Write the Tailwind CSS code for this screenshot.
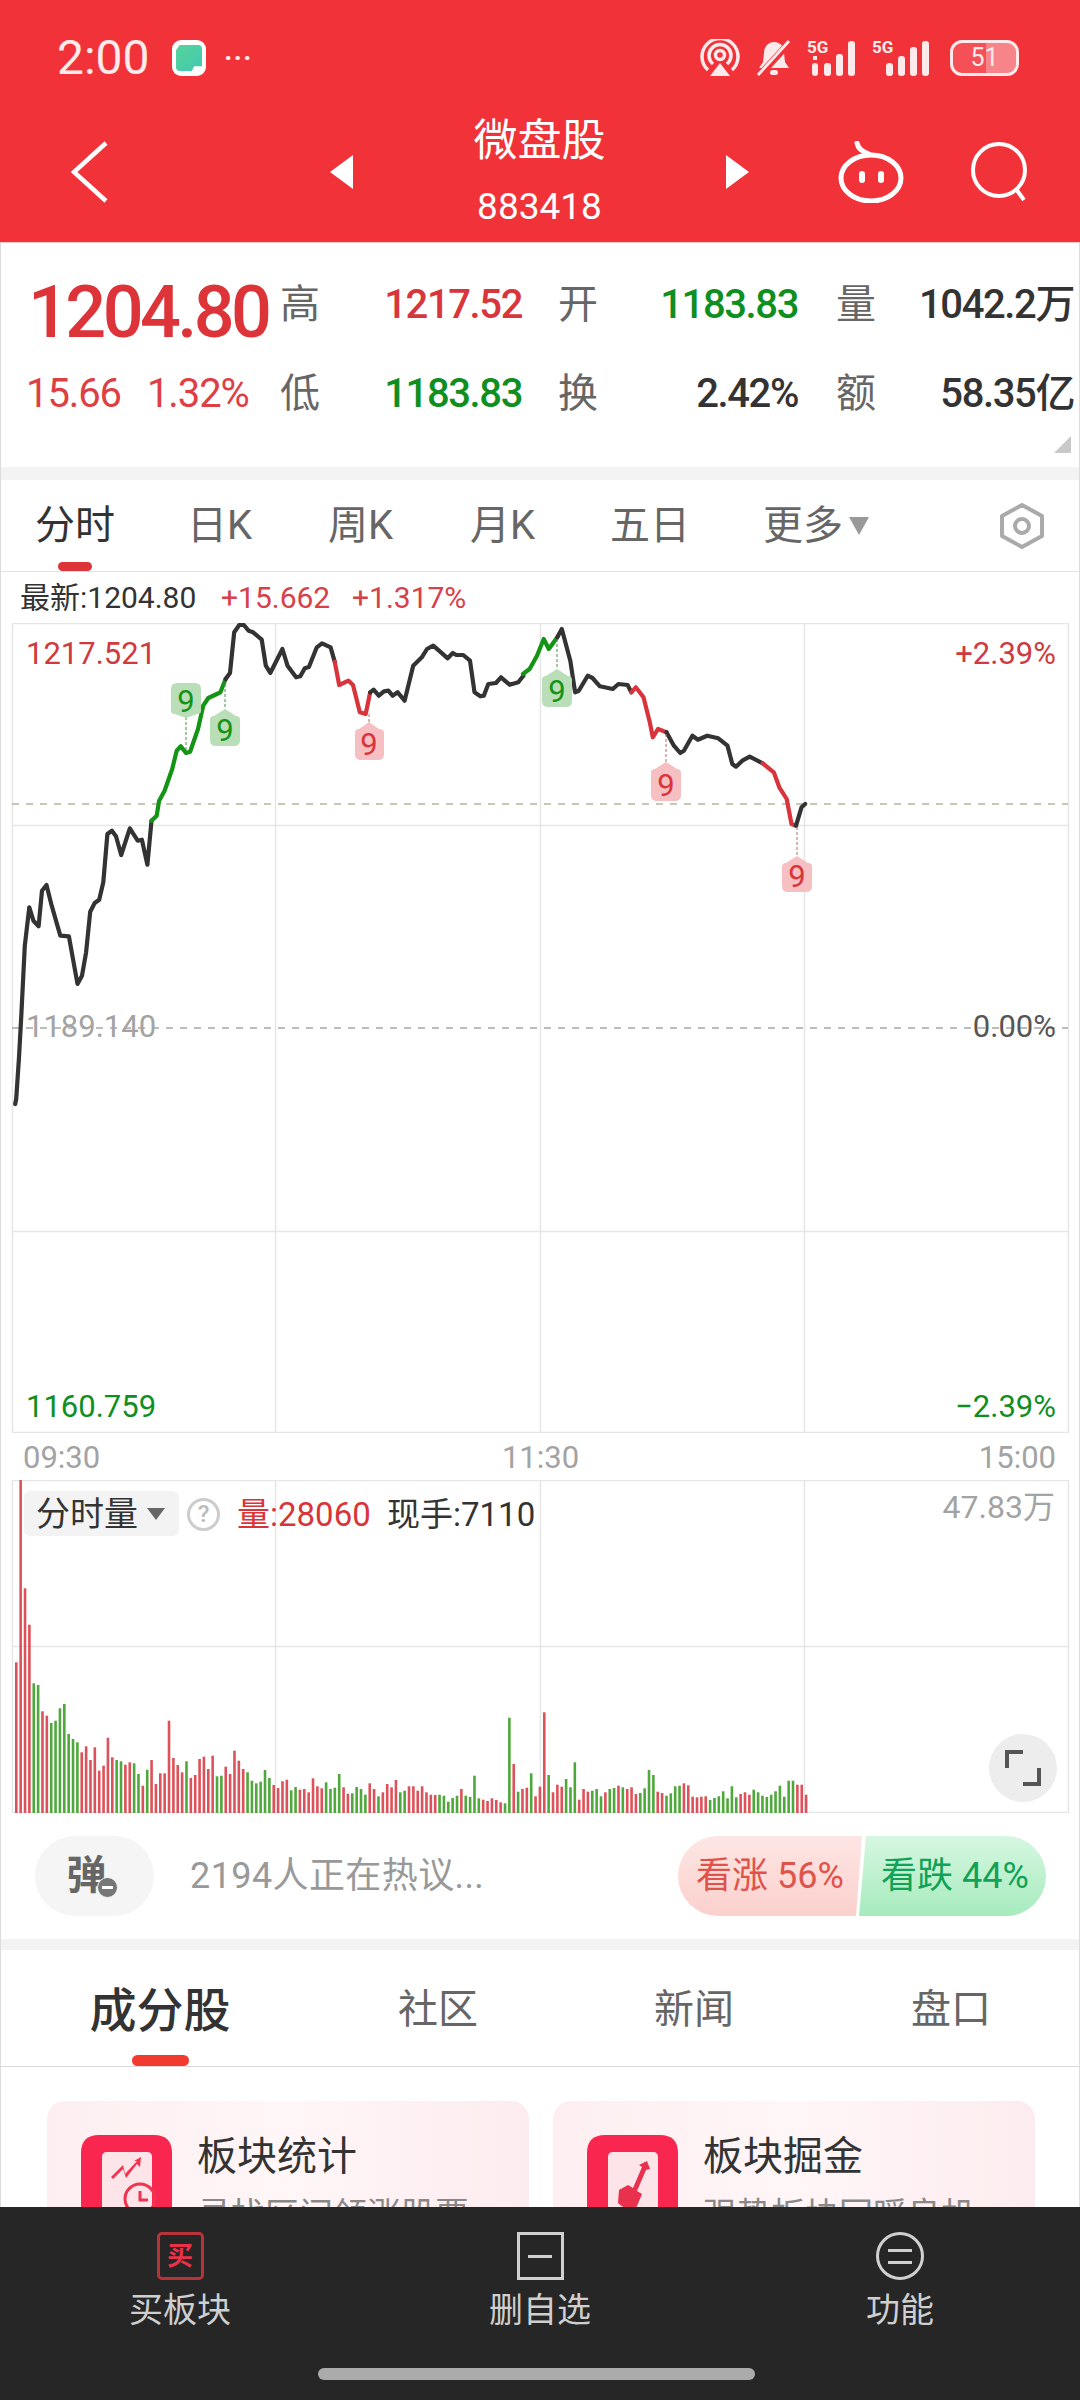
<!DOCTYPE html>
<html lang="zh-CN">
<head>
    <meta charset="UTF-8">
    <title>微盘股 883418</title>
    <script src="https://cdn.jsdelivr.net/npm/@tailwindcss/browser@4"></script>
</head>
<body class="bg-white font-['Roboto','Noto_Sans_CJK_SC',sans-serif]">
<div class="w-[1080px] h-[2400px] flex flex-col overflow-hidden bg-white">

    <!-- 顶部红色区域 -->
    <header class="h-[243px] shrink-0 bg-[#f23239] text-white border-b border-[#f7c9c9]">
        <div class="h-[116px] flex items-center text-[#fdeaea]">
            <span class="ml-[57px] w-[99px] text-[48px] leading-none">2:00</span>
            <div class="ml-[16px] w-[34px] h-[36px] rounded-[9px] bg-white flex items-center justify-center">
                <div class="w-[26px] h-[26px] rounded-[4px] bg-gradient-to-br from-[#58d39a] to-[#3fc8b0] [clip-path:polygon(14%_0,100%_0,100%_82%,70%_82%,60%_100%,0_100%,0_20%)]"></div>
            </div>
            <span class="ml-[18px] w-[32px] text-[28px] leading-none font-bold tracking-[1px]">···</span>
            <svg class="ml-[443px] w-[42px] h-[38px]" viewBox="0 0 42 38" fill="none" stroke="#fdeaea" stroke-width="3.5">
                <path d="M9 31a18 18 0 1 1 24 0"/>
                <path d="M14 25a11 11 0 1 1 14 0"/>
                <circle cx="21" cy="16" r="4.5"/>
                <path d="M11 37l10-13 10 13z" fill="#fdeaea" stroke="none"/>
            </svg>
            <svg class="ml-[15px] w-[36px] h-[38px]" viewBox="0 0 36 38" fill="#fdeaea">
                <path d="M18 3c7 0 10 5 10 11l1 9 4 6H3l4-6 1-9c0-6 4-11 10-11z"/>
                <rect x="14" y="31" width="8" height="5" rx="2.5"/>
                <path d="M34 3L3 37" stroke="#f23239" stroke-width="7"/>
                <path d="M33 2L2 36" stroke="#fdeaea" stroke-width="3"/>
            </svg>
            <svg class="ml-[15px] w-[60px] h-[38px]" viewBox="0 0 60 38" fill="#fdeaea">
                <text x="0" y="14" font-size="17" font-weight="700" font-family="Roboto">5G</text>
                <rect x="6" y="17" width="4" height="4"/><rect x="5" y="24" width="6" height="13" rx="3"/>
                <rect x="17" y="24" width="7" height="13" rx="3"/>
                <rect x="29" y="15" width="7" height="22" rx="3"/>
                <rect x="41" y="2" width="7" height="35" rx="3"/>
            </svg>
            <svg class="ml-[5px] w-[60px] h-[38px]" viewBox="0 0 60 38" fill="#fdeaea">
                <text x="0" y="14" font-size="17" font-weight="700" font-family="Roboto">5G</text>
                <rect x="14" y="24" width="7" height="13" rx="3"/>
                <rect x="26" y="17" width="7" height="20" rx="3"/>
                <rect x="38" y="8" width="7" height="29" rx="3"/>
                <rect x="50" y="2" width="7" height="35" rx="3"/>
            </svg>
            <div class="relative ml-[18px] w-[69px] h-[36px] rounded-[12px] border-[3px] border-[#fdeaea] overflow-hidden bg-white/15 flex justify-end">
                <div class="h-full w-[30px] bg-white/30"></div>
                <span class="absolute inset-0 text-center text-[25px] leading-[30px]">51</span>
            </div>
        </div>
        <nav class="h-[112px] flex items-center">
            <svg class="ml-[70px] w-[40px] h-[62px]" viewBox="0 0 40 62" fill="none" stroke="#fff" stroke-width="4.5">
                <path d="M36 2L4 31l32 29"/>
            </svg>
            <svg class="ml-[220px] w-[23px] h-[34px]" viewBox="0 0 23 34" fill="#fff"><path d="M23 0v34L0 17z"/></svg>
            <div class="w-[373px] flex flex-col items-center">
                <span class="text-[44px] leading-[44px]">微盘股</span>
                <span class="mt-[26px] text-[37px] leading-[36px]">883418</span>
            </div>
            <svg class="w-[23px] h-[34px]" viewBox="0 0 23 34" fill="#fff"><path d="M0 0v34l23-17z"/></svg>
            <svg class="ml-[89px] w-[66px] h-[62px]" viewBox="0 0 66 62" fill="none" stroke="#fff" stroke-width="5">
                <path d="M19 2c1 6 6 9 12 11" stroke-width="5" stroke-linecap="round"/>
                <ellipse cx="33" cy="37" rx="30" ry="23"/>
                <rect x="21" y="30" width="6" height="12" rx="3" fill="#fff" stroke="none"/>
                <rect x="40" y="30" width="6" height="12" rx="3" fill="#fff" stroke="none"/>
            </svg>
            <svg class="ml-[67px] w-[60px] h-[60px]" viewBox="0 0 60 60" fill="none" stroke="#fff" stroke-width="4">
                <circle cx="28" cy="28" r="26"/>
                <path d="M45 47l8 11"/>
            </svg>
        </nav>
    </header>

    <main class="flex-1 min-h-0 flex flex-col border-x border-[#dcdcdc]">
        <!-- 报价 -->
        <section class="h-[224px] shrink-0 relative flex pt-[17px]">
            <div class="w-[279px] shrink-0">
                <div class="h-[89px] pl-[27px] flex items-end text-[#dd3439] text-[72px] leading-none font-medium tracking-[-3.6px]">1204.80</div>
                <div class="h-[89px] pl-[25px] flex items-center gap-[26px] text-[#dd3f44] text-[40px] leading-none tracking-[-1.1px]"><span>15.66</span><span>1.32%</span></div>
            </div>
            <div class="grid grid-cols-[278px_278px_238px] auto-rows-[89px] text-[40px] leading-none tracking-[-1.4px] font-medium">
                <div class="flex items-center justify-between pr-[36px]"><span class="text-[#666] font-normal tracking-normal">高</span><span class="text-[#d8363c]">1217.52</span></div>
                <div class="flex items-center justify-between pr-[38px]"><span class="text-[#666] font-normal tracking-normal">开</span><span class="text-[#0f8f1f]">1183.83</span></div>
                <div class="flex items-center justify-between"><span class="text-[#666] font-normal tracking-normal">量</span><span class="text-[#333]">1042.2万</span></div>
                <div class="flex items-center justify-between pr-[36px]"><span class="text-[#666] font-normal tracking-normal">低</span><span class="text-[#0f8f1f]">1183.83</span></div>
                <div class="flex items-center justify-between pr-[38px]"><span class="text-[#666] font-normal tracking-normal">换</span><span class="text-[#333]">2.42%</span></div>
                <div class="flex items-center justify-between"><span class="text-[#666] font-normal tracking-normal">额</span><span class="text-[#333]">58.35亿</span></div>
            </div>
            <svg class="absolute right-[8px] bottom-[14px] w-[17px] h-[17px]" viewBox="0 0 17 17" fill="#c9c9c9"><path d="M17 0v17H0z"/></svg>
        </section>
        <div class="h-[13px] shrink-0 bg-[#f3f3f3]"></div>

        <!-- 周期切换 -->
        <div class="h-[92px] shrink-0 relative flex items-center text-[40px] leading-none text-[#666] border-b border-[#e3e3e3]">
            <span class="ml-[34px] w-[152px] text-[#333]">分时</span>
            <span class="w-[141px]">日K</span>
            <span class="w-[142px]">周K</span>
            <span class="w-[140px]">月K</span>
            <span class="w-[153px]">五日</span>
            <span class="w-[86px]">更多</span>
            <svg class="w-[20px] h-[18px]" viewBox="0 0 20 18" fill="#999"><path d="M0 0h20L10 18z"/></svg>
            <svg class="ml-[130px] w-[46px] h-[46px]" viewBox="0 0 46 46" fill="none" stroke="#aaa" stroke-width="4">
                <path d="M23 2l20 11v20L23 44 3 33V13z" stroke-linejoin="round"/>
                <circle cx="23" cy="23" r="7"/>
            </svg>
            <div class="absolute left-[57px] bottom-0 w-[34px] h-[9px] rounded-full bg-[#dd3439]"></div>
        </div>

        <!-- 最新价 -->
        <div class="h-[51px] shrink-0 flex items-center text-[30px] leading-none">
            <span class="ml-[19px] w-[201px] text-[#333]">最新:1204.80</span>
            <span class="w-[131px] text-[#d8404a]">+15.662</span>
            <span class="text-[#d8404a]">+1.317%</span>
        </div>

        <!-- 分时图 -->
        <div class="h-[810px] shrink-0 relative">
            <svg id="chart" class="absolute top-0 left-[-1px] w-[1080px] h-[810px]" viewBox="0 624 1080 810" fill="none">
                <path d="M12.5 624.5H1068.5V1433.5H12.5ZM12 826.5H1068M12 1232.5H1068M275.5 624V1434M540.5 624V1434M804.5 624V1434" stroke="#e6e6e6" stroke-width="1.5"/>
                <path d="M12 805H1068" stroke="#b5b59c" stroke-width="1.5" stroke-dasharray="7 7"/>
                <path d="M12 1029H1068" stroke="#a6a6a6" stroke-width="1.5" stroke-dasharray="7 7"/>
                <g id="lines" stroke-width="4.2" stroke-linejoin="round" stroke-linecap="round"></g>
                <g stroke-width="1" stroke-dasharray="3 2">
                    <path d="M186 718V753M225 685V710M557 640V670" stroke="#4a8f4a"/>
                    <path d="M369 715V723M666 735V763M797 828V857" stroke="#b56a6a"/>
                </g>
                <g font-size="31" font-family="Roboto" text-anchor="middle">
                    <g fill="#b9deb8">
                        <path d="M171 690q0-6 6-6h18q6 0 6 6v22q0 3-4 3l-11 4-11-4q-4 0-4-3z"/>
                        <path d="M210 721q0-4 4-4l11-7 11 7q4 0 4 4v20q0 6-6 6h-18q-6 0-6-6z"/>
                        <path d="M542 681q0-4 4-4l11-7 11 7q4 0 4 4v21q0 6-6 6h-18q-6 0-6-6z"/>
                    </g>
                    <g fill="#f6bfc1">
                        <path d="M355 734q0-4 4-4l10-7 10 7q5 0 5 4v21q0 6-6 6h-17q-6 0-6-6z"/>
                        <path d="M651 774q0-4 4-4l11-7 11 7q4 0 4 4v22q0 6-6 6h-18q-6 0-6-6z"/>
                        <path d="M782 868q0-4 4-4l11-7 11 7q4 0 4 4v19q0 6-6 6h-18q-6 0-6-6z"/>
                    </g>
                    <text x="186" y="713" fill="#149414">9</text>
                    <text x="225" y="742" fill="#149414">9</text>
                    <text x="557" y="703" fill="#149414">9</text>
                    <text x="369" y="756" fill="#d9333b">9</text>
                    <text x="666" y="797" fill="#d9333b">9</text>
                    <text x="797" y="888" fill="#d9333b">9</text>
                </g>
            </svg>
            <span class="absolute left-[25px] top-[18px] text-[31px] leading-[26px] text-[#cf3a40]">1217.521</span>
            <span class="absolute right-[23px] top-[18px] text-[31px] leading-[26px] text-[#cf3a40]">+2.39%</span>
            <span class="absolute left-[25px] top-[391px] text-[31px] leading-[26px] text-[#a3a3a3]">1189.140</span>
            <span class="absolute right-[23px] top-[391px] text-[31px] leading-[26px] text-[#555]">0.00%</span>
            <span class="absolute left-[25px] top-[771px] text-[31px] leading-[26px] text-[#0f8f1f]">1160.759</span>
            <span class="absolute right-[23px] top-[771px] text-[31px] leading-[26px] text-[#0f8f1f]">−2.39%</span>
        </div>

        <!-- 时间轴 -->
        <div class="h-[47px] shrink-0 pl-[22px] pr-[23px] pt-[2px] flex items-center justify-between text-[31px] leading-none text-[#a3a3a3]">
            <span>09:30</span><span class="ml-[2px]">11:30</span><span>15:00</span>
        </div>

        <!-- 成交量 -->
        <div class="h-[333px] shrink-0 relative">
            <svg class="absolute top-0 left-[-1px] w-[1080px] h-[333px]" viewBox="0 1481 1080 333" fill="none">
                <path d="M12.5 1481.5H1068.5V1813.5H12.5ZM12 1647.5H1068M275.5 1481V1814M540.5 1481V1814M804.5 1481V1814" stroke="#e6e6e6" stroke-width="1.5"/>
                <g id="bars"></g>
            </svg>
            <div class="absolute left-[23px] top-[11px] w-[155px] h-[45px] rounded-[6px] bg-[#f3f3f3] flex items-center pl-[12px] text-[34px] leading-none text-[#333]">
                <span>分时量</span>
                <svg class="ml-[9px] w-[18px] h-[12px]" viewBox="0 0 18 12" fill="#666"><path d="M0 0h18L9 12z"/></svg>
            </div>
            <div class="absolute left-[186px] top-[18px] w-[33px] h-[33px] rounded-full border-[3px] border-[#ccc] text-[#bbb] text-[24px] leading-[27px] text-center font-medium">?</div>
            <span class="absolute left-[236px] top-[17px] text-[33px] leading-[36px] text-[#d8343a]">量:28060</span>
            <span class="absolute left-[386px] top-[17px] text-[33px] leading-[36px] text-[#333]">现手:7110</span>
            <span class="absolute right-[24px] top-[12px] text-[32px] leading-[30px] text-[#a3a3a3]">47.83万</span>
            <div class="absolute left-[988px] top-[254px] w-[68px] h-[68px] rounded-full bg-[#ededed] flex items-center justify-center">
                <svg class="w-[38px] h-[38px]" viewBox="0 0 38 38" fill="none" stroke="#555" stroke-width="4"><path d="M3 19V3h16M35 19v16H19"/></svg>
            </div>
        </div>

        <!-- 弹幕 -->
        <div class="h-[126px] shrink-0 flex items-center">
            <div class="relative ml-[34px] w-[119px] h-[80px] rounded-full bg-[#f5f5f5] flex items-center justify-center text-[40px] leading-none font-bold text-[#666]">
                <span class="mr-[16px]">弹</span>
                <div class="absolute left-[62px] top-[41px] w-[21px] h-[21px] rounded-full bg-[#777] border border-[#f5f5f5] flex items-center justify-center">
                    <div class="w-[11px] h-[3px] bg-white"></div>
                </div>
            </div>
            <span class="ml-[36px] w-[488px] text-[36px] leading-none tracking-[0.4px] text-[#999]">2194人正在热议...</span>
            <div class="flex text-[36px] leading-none">
                <div class="w-[184px] h-[80px] rounded-l-full bg-gradient-to-b from-[#fde6e4] to-[#fbd0cc] [clip-path:polygon(0_0,100%_0,178px_100%,0_100%)] flex items-center pl-[18px] text-[#e0534a]">看涨 56%</div>
                <div class="ml-[-3px] w-[187px] h-[80px] rounded-r-full bg-gradient-to-b from-[#d6f7e1] to-[#a6ebbe] [clip-path:polygon(7px_0,100%_0,100%_100%,0_100%)] flex items-center pl-[22px] text-[#11a257]">看跌 44%</div>
            </div>
        </div>
        <div class="h-[11px] shrink-0 bg-[#f3f3f3]"></div>

        <!-- 底部标签 -->
        <div class="h-[117px] shrink-0 relative border-b border-[#d9d9d9] text-[40px] leading-none text-[#666]">
            <div class="h-full grid grid-cols-[318px_238px_274px_240px] items-center pt-[4px] text-center">
                <span class="text-[47px] leading-none font-medium text-[#333]">成分股</span>
                <span>社区</span>
                <span>新闻</span>
                <span>盘口</span>
            </div>
            <div class="absolute left-[131px] bottom-0 w-[57px] h-[11px] rounded-full bg-[#f23a30]"></div>
        </div>

        <!-- 功能卡片 -->
        <div class="flex-1 min-h-0 overflow-hidden flex gap-[24px] pl-[46px] pt-[34px]">
            <div class="relative w-[482px] h-[200px] shrink-0 rounded-[18px] bg-gradient-to-r from-[#fdeff1] via-[#fff6f7] to-[#fdecef] flex pl-[34px] pt-[34px] gap-[25px]">
                <svg class="w-[91px] h-[100px] shrink-0" viewBox="0 0 91 100">
                    <path d="M0 100V18Q0 0 18 0H73Q91 0 91 18V100Z" fill="#f9264f"/>
                    <path d="M21 100V22q0-5 5-5H66q5 0 5 5V100Z" fill="#fde4e8"/>
                    <path d="M30 42l12-12 2 9 12-13-3 0 7-4-1 10-3-3-11 14-3-9-10 10z" fill="#f0334f"/>
                    <circle cx="59" cy="64" r="15" fill="none" stroke="#f0334f" stroke-width="3"/>
                    <path d="M59 56v9h8" fill="none" stroke="#f0334f" stroke-width="3"/>
                </svg>
                <div>
                    <div class="text-[40px] leading-[44px] text-[#333]">板块统计</div>
                    <div class="mt-[16px] text-[34px] leading-[40px] text-[#888]">寻找区间领涨股票</div>
                </div>
            </div>
            <div class="relative w-[482px] h-[200px] shrink-0 rounded-[18px] bg-gradient-to-r from-[#fdeff1] via-[#fff6f7] to-[#fdecef] flex pl-[34px] pt-[34px] gap-[25px]">
                <svg class="w-[91px] h-[100px] shrink-0" viewBox="0 0 91 100">
                    <path d="M0 100V18Q0 0 18 0H73Q91 0 91 18V100Z" fill="#f9264f"/>
                    <path d="M21 100V22q0-5 5-5H66q5 0 5 5V100Z" fill="#fde4e8"/>
                    <path d="M60 26l3 8-4 1-9 21 5 3-5 12q-3 5-9 3-6-2-10-6l1-13 9-5 5 3 9-21-3-2z" fill="#e9304c"/>
                </svg>
                <div>
                    <div class="text-[40px] leading-[44px] text-[#333]">板块掘金</div>
                    <div class="mt-[16px] text-[34px] leading-[40px] text-[#888]">强势板块回暖良机</div>
                </div>
            </div>
        </div>
    </main>

    <!-- 底部操作栏 -->
    <footer class="h-[193px] shrink-0 bg-[#262626] text-[#cfcfcf]">
        <div class="grid grid-cols-3 pt-[25px]">
            <div class="flex flex-col items-center">
                <div class="w-[47px] h-[48px] rounded-[5px] border-[3px] border-[#b8323a] flex items-center justify-center text-[26px] leading-none font-bold text-[#e8324a]">买</div>
                <span class="mt-[13px] text-[34px] leading-[34px]">买板块</span>
            </div>
            <div class="flex flex-col items-center">
                <div class="w-[47px] h-[48px] border-[3px] border-[#d0d0d0] flex items-center justify-center">
                    <div class="w-[24px] h-[3px] bg-[#d0d0d0]"></div>
                </div>
                <span class="mt-[13px] text-[34px] leading-[34px]">删自选</span>
            </div>
            <div class="flex flex-col items-center">
                <div class="w-[48px] h-[48px] rounded-full border-[3px] border-[#d0d0d0] flex flex-col items-center justify-center gap-[9px]">
                    <div class="w-[24px] h-[3px] bg-[#d0d0d0]"></div>
                    <div class="w-[24px] h-[3px] bg-[#d0d0d0]"></div>
                </div>
                <span class="mt-[13px] text-[34px] leading-[34px]">功能</span>
            </div>
        </div>
        <div class="ml-[318px] mt-[41px] w-[437px] h-[12px] rounded-full bg-[#ababab]"></div>
    </footer>
</div>

<script>
    // 坐标从放大图读出: A 段 x/2.904, B 段 500+x/2.703, y 都是 600+y/3
    const A = p => [p[0] / 2.904, 600 + p[1] / 3];
    const B = p => [500 + p[0] / 2.703, 600 + p[1] / 3];
    const pairs = s => s.trim().split(/\s+/).map(t => t.split(',').map(Number));
    const BLACK = '#333333', GREEN = '#149414', RED = '#d9333b';

    const segmentos = [
        [BLACK, A, '44,1515 47,1500 55,1380 62,1250 72,1040 85,925 97,965 112,982 122,875 135,858 150,920 175,1010 200,1012 225,1155 238,1130 250,1060 262,938 275,912 288,902 300,850 312,705 325,695 337,712 352,768 377,688 400,725 412,722 428,797 440,665'],
        [GREEN, A, '440,665 455,650 462,605 478,575 500,510 513,455 525,442 540,462 552,458 575,390 590,320 605,297 630,285 640,280 655,240'],
        [BLACK, A, '655,240 668,222 680,100 695,78 708,78 722,95 735,100 760,122 772,200 785,222 820,150 835,200 860,235 872,232 885,208 897,204 920,145 935,133 960,145 972,188'],
        [RED, A, '972,188 985,258 1012,245 1025,258 1045,340 1062,345 1075,280'],
        [BLACK, A, '1075,280 1085,272 1100,290 1115,277 1128,275 1140,290 1155,280 1175,305 1200,200 1225,175 1240,150 1258,140 1275,155 1300,178 1315,162 1325,168 1345,168 1365,185 1378,280 1395,292 1405,290 1418,255 1440,252 1455,235 1480,257 1505,250 1520,230'],
        [GREEN, B, '62,225 80,210 100,170 118,120 132,150 155,115'],
        [BLACK, B, '155,115 167,90 190,185 203,280 213,275 237,230 250,237 270,262 305,270 320,255 345,258 355,280'],
        [RED, B, '355,280 367,265 388,295 405,370 413,415 427,390 450,400'],
        [BLACK, B, '450,400 470,440 487,462 497,455 520,410 535,422 560,410 590,418 615,440 628,495 638,503 655,485 675,473 710,493'],
        [RED, B, '710,493 740,520 755,565 775,600 788,675 800,680'],
        [BLACK, B, '800,680 815,625 825,615']
    ];
    document.getElementById('lines').innerHTML = segmentos.map(([color, f, s]) => {
        const pts = pairs(s).map(f).map(p => p[0].toFixed(1) + ',' + p[1].toFixed(1)).join(' ');
        return `<polyline points="${pts}" stroke="${color}"/>`;
    }).join('');

    // 成交量: 每根柱的顶部 y(放大图), r 红 g 绿
    const barras = '640r 92r 418r 527r 703g 708g 787r 800r 822g 815g 778g 765g 855g 870g 880g 910r 892r 933r 895r 965r 950r 866r 925r 933g 937g 947r 940r 943g 975g 1010r 962g 933r 1005r 973r 973r 815r 927r 948r 970r 937g 987r 978r 930r 923r 960r 920r 982g 980g 953r 975r 905r 935r 960r 970g 995g 1003g 998g 963g 987g 1008r 1017r 997r 992r 1024g 1014g 1022r 1020r 1030r 988r 1012r 1018r 1000g 1020g 1016g 975g 1015r 1034r 1033g 1014g 1020g 1037g 1003r 1020r 1042g 1030r 1005r 1015r 993r 1030g 1025g 1012r 1012r 1025r 1012r 1030r 1037r 1038r 1037g 1040g 1058g 1047g 1040g 1020r 1040g 1044g 980g 1048g 1052r 1056r 1048r 1053r 1060r 1063g 806g 945r 1028g 1020r 1016r 973g 1042r 1013r 790r 978g 1030r 1007r 1013r 990g 1015g 940g 1052r 1020r 1028r 1025g 1020g 1042g 1030r 1020g 1017g 1010r 1015g 1020r 1015r 1035r 1032g 1018g 963g 978g 1028r 1032r 1040g 1033g 1012g 1010g 1003r 1009r 1043r 1045r 1043r 1042r 1053g 1047g 1042g 1027g 1048g 1012g 1045g 1035r 1030r 1037r 1022g 1030g 1040g 1044g 1037g 1027g 1010g 1043g 995g 995g 1007r 1007r 1037r'.split(' ');
    const paso = (806 - 16.2) / (barras.length - 1);
    document.getElementById('bars').innerHTML = barras.map((b, i) => {
        const top = 1450 + parseInt(b) / 3;
        const fill = b.endsWith('r') ? '#dd525a' : '#4fa83c';
        return `<rect x="${(15 + i * paso).toFixed(2)}" y="${top.toFixed(1)}" width="2.6" height="${(1814 - top).toFixed(1)}" fill="${fill}"/>`;
    }).join('');
</script>
</body>
</html>
